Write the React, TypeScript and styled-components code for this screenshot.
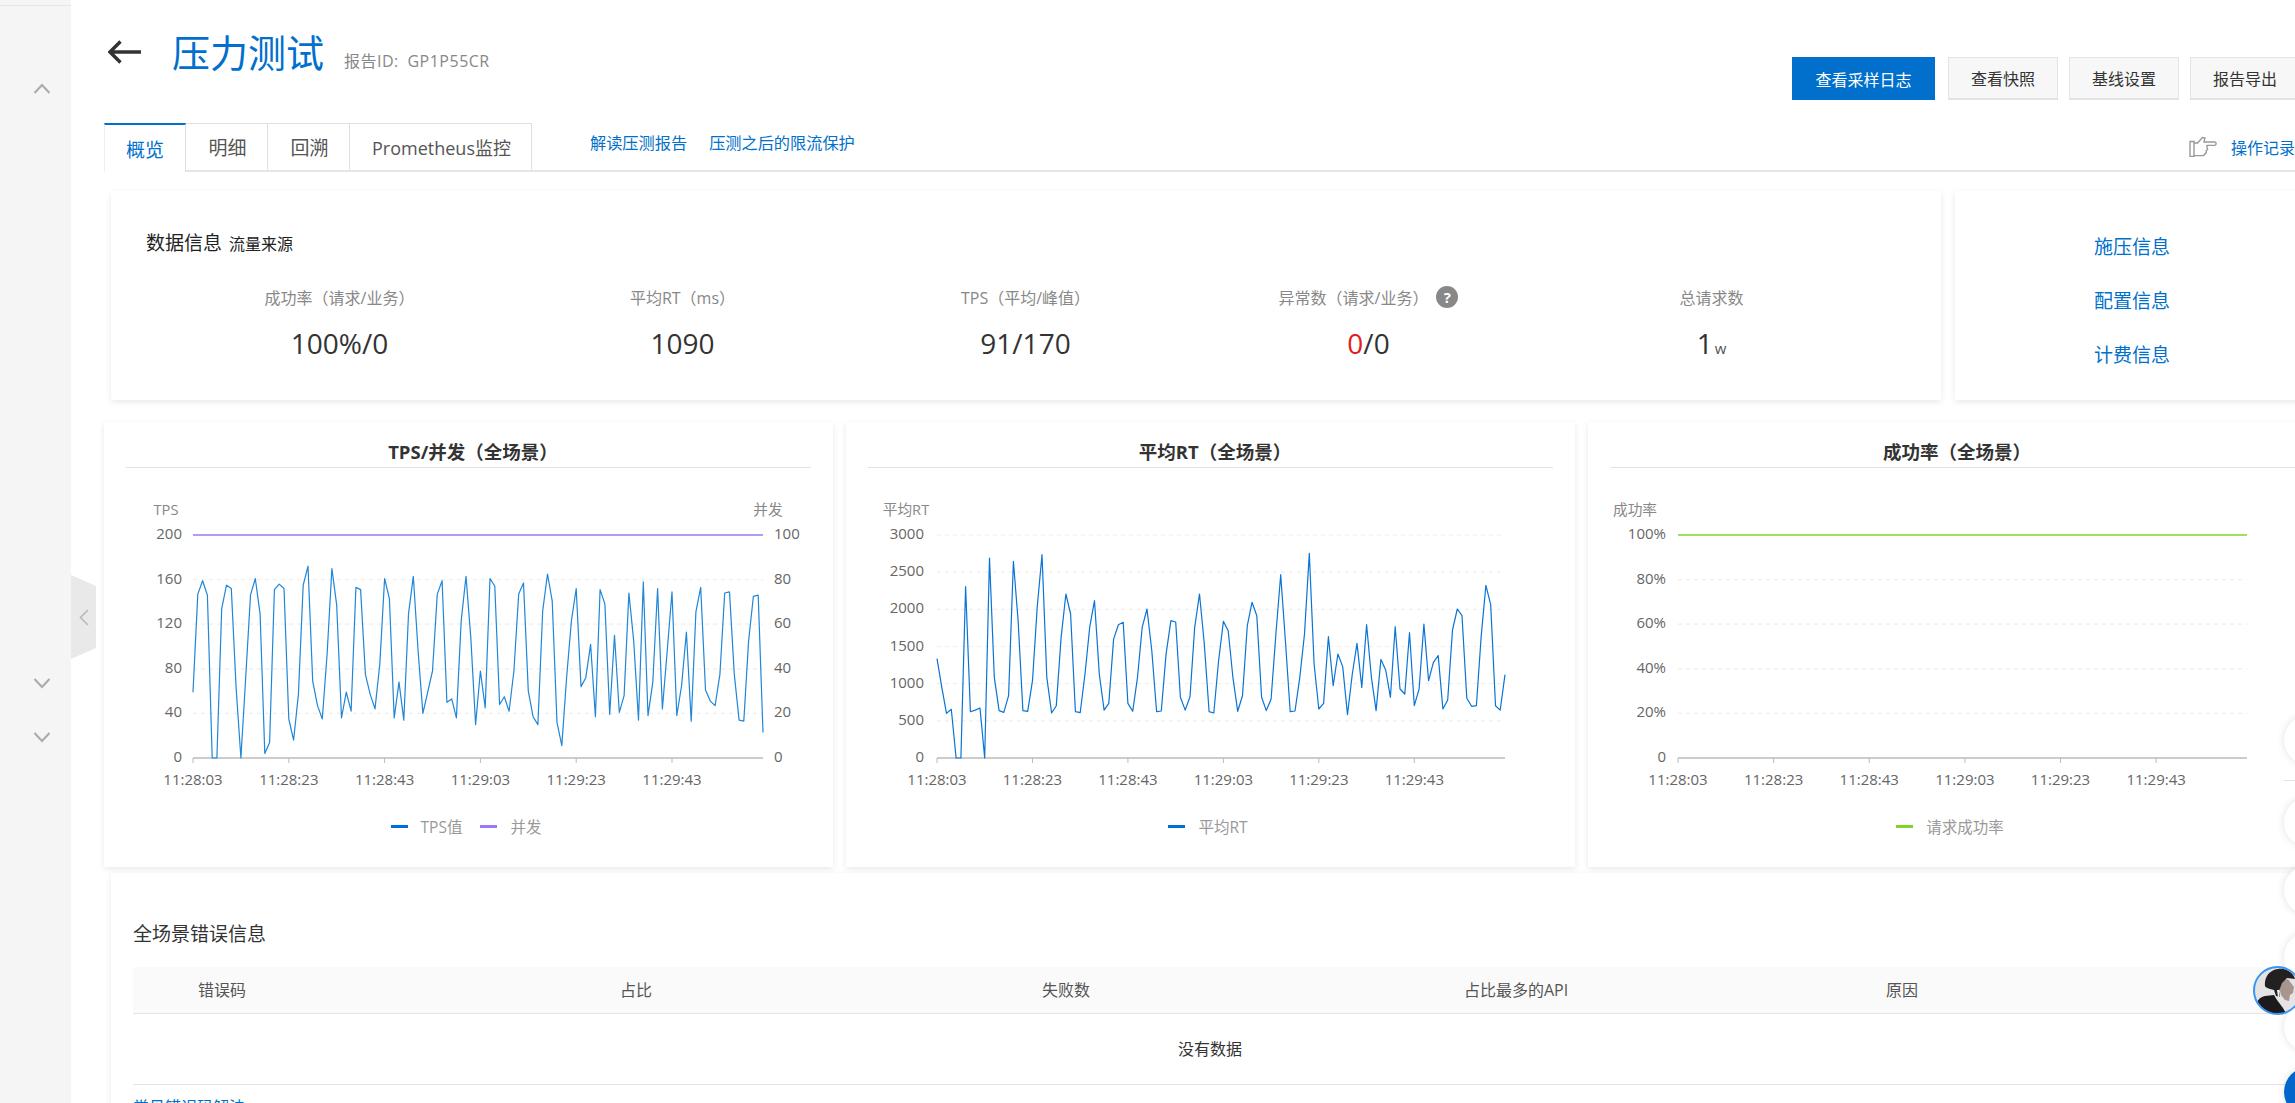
import styled, { createGlobalStyle } from "styled-components";

const GlobalStyle = createGlobalStyle`
  html, body {
    margin: 0;
    height: 100%;
    overflow: hidden;
    background: #fff;
    font-family: "Open Sans", "Noto Sans CJK SC", sans-serif;
    color: #333;
  }
  #root { height: 100%; }
`;

const BLUE = "#0070cc";

const Page = styled.div`
  position: relative;
  display: flex;
  width: 2295px;
  height: 1103px;
  overflow: hidden;
`;

const Sidebar = styled.aside`
  flex: none;
  width: 71px;
  height: 100%;
  background: #f5f5f5;
  border-top: 1px solid transparent;
  display: flex;
  flex-direction: column;
  align-items: center;
  padding-left: 13px;
  box-sizing: border-box;
`;

const SideRule = styled.div`
  align-self: stretch;
  height: 1px;
  margin: 4px 0 0 -13px;
  background: #e6e6e6;
`;

const SideChevron = styled.svg<{ $gap: number }>`
  flex: none;
  width: 18px;
  height: 11px;
  margin-top: ${(p) => p.$gap}px;
  fill: none;
  stroke: #aaa;
  stroke-width: 2;
`;

const CollapseTab = styled.div`
  position: absolute;
  left: 71px;
  top: 575px;
  width: 25px;
  height: 84px;
  background: #e9e9e9;
  clip-path: polygon(0 0, 100% 13%, 100% 87%, 0 100%);
  display: flex;
  align-items: center;
  justify-content: center;
`;

const Main = styled.main`
  flex: none;
  width: 2213px;
  margin-left: 33px;
`;

const Header = styled.header`
  display: flex;
  justify-content: space-between;
  align-items: flex-start;
  width: 2196px;
  height: 123px;
`;

const TitleGroup = styled.div`
  display: flex;
  align-items: baseline;
  padding: 26px 0 0 4px;
`;

const BackArrow = styled.svg`
  width: 33px;
  height: 24px;
  margin-right: 31px;
  fill: none;
  stroke: #333;
  stroke-width: 3.4;
  align-self: center;
`;

const Title = styled.h1`
  margin: 0 20px 0 0;
  font-size: 38px;
  line-height: 52px;
  font-weight: 400;
  color: ${BLUE};
`;

const ReportId = styled.span`
  font-size: 16px;
  color: #888;
  word-spacing: 4px;
  letter-spacing: 0.5px;
`;

const Actions = styled.div`
  display: flex;
  padding-top: 57px;
`;

const ActionButton = styled.button<{ $primary?: boolean }>`
  height: 43px;
  width: ${(p) => (p.$primary ? "143px" : "110px")};
  margin-right: ${(p) => (p.$primary ? "13px" : "11px")};
  padding: 0;
  font: inherit;
  font-size: 16px;
  color: ${(p) => (p.$primary ? "#fff" : "#333")};
  background: ${(p) => (p.$primary ? "#0070cc" : "#f7f7f7")};
  border: ${(p) => (p.$primary ? "none" : "1px solid #e3e3e3")};
  border-bottom-width: ${(p) => (p.$primary ? "0" : "2px")};
  &:last-child { margin-right: 0; }
`;

const TabBar = styled.nav`
  display: flex;
  align-items: stretch;
  width: 2191px;
  height: 47px;
  box-sizing: content-box;
  border-bottom: 2px solid #e6e6e6;
`;

const Tab = styled.div<{ $active?: boolean; $wide?: boolean }>`
  flex: none;
  width: ${(p) => (p.$wide ? "182px" : "82px")};
  box-sizing: border-box;
  display: flex;
  align-items: center;
  justify-content: center;
  padding-left: ${(p) => (p.$active ? "0" : "2px")};
  font-size: ${(p) => (p.$wide ? "18px" : "19px")};
  height: ${(p) => (p.$active ? "49px" : "47px")};
  color: ${(p) => (p.$active ? BLUE : "#555")};
  background: #fff;
  border-top: ${(p) => (p.$active ? `2px solid ${BLUE}` : "1px solid #e0e0e0")};
  border-right: 1px solid #e0e0e0;
  border-left: ${(p) => (p.$active ? "1px solid #eee" : "none")};
`;

const TabLinks = styled.div`
  display: flex;
  gap: 22px;
  margin-left: 58px;
  padding-top: 8px;
  font-size: 16.2px;
  line-height: 24px;
  color: ${BLUE};
`;

const OpLog = styled.div`
  display: flex;
  align-items: center;
  gap: 14px;
  margin-left: auto;
  font-size: 16px;
  color: ${BLUE};
  white-space: nowrap;
`;

const HandIcon = styled.svg`
  width: 28px;
  height: 21px;
  fill: none;
  stroke: #999;
  stroke-width: 1.4;
`;

const Card = styled.section`
  background: #fff;
  box-shadow: 0 2px 6px rgba(0, 0, 0, 0.09);
  box-sizing: border-box;
`;

const TopRow = styled.div`
  display: flex;
  gap: 14px;
  margin: 19px 0 0 7px;
`;

const SummaryCard = styled(Card)`
  width: 1830px;
  height: 209px;
  padding: 40px 0 0 35px;
`;

const SummaryHeading = styled.div`
  display: flex;
  align-items: baseline;
  gap: 7px;
  font-size: 19px;
  line-height: 24px;
  color: #222;
`;

const SummarySub = styled.span`
  font-size: 16px;
  color: #222;
`;

const MetricGrid = styled.div`
  display: grid;
  grid-template-columns: repeat(5, 343px);
  margin: 29px 0 0 22px;
`;

const Metric = styled.div`
  display: flex;
  flex-direction: column;
  align-items: center;
  gap: 16px;
`;

const MetricLabel = styled.div`
  display: flex;
  align-items: center;
  gap: 8px;
  height: 24px;
  font-size: 16px;
  color: #888;
`;

const HelpBadge = styled.span`
  display: inline-flex;
  align-items: center;
  justify-content: center;
  width: 22px;
  height: 22px;
  border-radius: 50%;
  background: #888;
  color: #fff;
  font-size: 15px;
  font-weight: 700;
`;

const MetricValue = styled.div`
  font-size: 28px;
  line-height: 36px;
  color: #333;
`;

const Danger = styled.span`
  color: #e02020;
`;

const Unit = styled.span`
  font-size: 15px;
  margin-left: 2px;
  color: #555;
`;

const SideCard = styled(Card)`
  width: 354px;
  height: 209px;
  padding-top: 11px;
  display: flex;
  flex-direction: column;
  align-items: center;
  justify-content: center;
  gap: 27px;
  font-size: 19px;
  line-height: 27px;
  color: ${BLUE};
`;

const ChartRow = styled.div`
  display: flex;
  gap: 13px;
  margin-top: 22px;
`;

const ChartCard = styled(Card)`
  flex: none;
  width: 729px;
  height: 445px;
`;

const ChartTitle = styled.h3`
  margin: 0 22px 1px;
  height: 45px;
  padding-left: 9px;
  box-sizing: content-box;
  border-bottom: 1px solid #e2e2e2;
  font-size: 18.5px;
  line-height: 60px;
  font-weight: 700;
  text-align: center;
  color: #333;
`;

const ChartSvg = styled.svg`
  display: block;
  width: 729px;
  height: 342px;
  font-family: "Open Sans", "Noto Sans CJK SC", sans-serif;
  font-size: 15px;
`;

const Legend = styled.div`
  display: flex;
  justify-content: center;
  align-items: center;
  height: 30px;
  padding-right: 5px;
  font-size: 15.5px;
  color: #999;
`;

const LegendItem = styled.div`
  display: flex;
  align-items: center;
  gap: 13px;
  margin: 0 9px;
`;

const Swatch = styled.i<{ $color: string }>`
  display: block;
  width: 17px;
  height: 3px;
  background: ${(p) => p.$color};
`;

const ErrorCard = styled(Card)`
  width: 2206px;
  height: 260px;
  margin: 6px 0 0 7px;
  padding: 49px 0 0 22px;
`;

const ErrorTitle = styled.div`
  font-size: 19px;
  line-height: 24px;
  color: #333;
`;

const TableHead = styled.div`
  display: grid;
  grid-template-columns: repeat(4, 422px) 1fr;
  align-items: center;
  width: 2154px;
  height: 47px;
  margin-top: 21px;
  padding: 0 0 2px 65px;
  box-sizing: border-box;
  background: #fafafa;
  border-bottom: 1px solid #e4e4e4;
  font-size: 16px;
  color: #555;
`;

const EmptyRow = styled.div`
  display: flex;
  align-items: center;
  justify-content: center;
  width: 2154px;
  height: 71px;
  padding-bottom: 2px;
  box-sizing: border-box;
  border-bottom: 1px solid #e4e4e4;
  font-size: 16px;
  color: #333;
`;

const HelpLink = styled.div`
  margin-top: 10px;
  font-size: 16px;
  line-height: 24px;
  color: ${BLUE};
`;

const FloatButton = styled.div<{ $top: number; $blue?: boolean }>`
  position: absolute;
  left: 2284px;
  top: ${(p) => p.$top}px;
  width: 50px;
  height: 50px;
  border-radius: 50%;
  background: ${(p) => (p.$blue ? "#0066cc" : "#fff")};
  box-shadow: 0 0 9px rgba(0, 0, 0, 0.12);
`;

const FloatRule = styled.div`
  position: absolute;
  left: 2284px;
  top: 780px;
  width: 11px;
  height: 1px;
  background: #e4e4e4;
`;

const Avatar = styled.svg`
  position: absolute;
  left: 2253px;
  top: 966px;
  width: 49px;
  height: 49px;
`;

const tpsData = [
  59, 147, 159, 146, 0, 0, 134, 155, 152, 63, 0, 72, 146, 161, 129, 4, 14, 151, 156, 152,
  35, 16, 57, 155, 172, 69, 47, 35, 93, 170, 137, 36, 59, 42, 153, 151, 75, 57, 44, 84,
  161, 143, 36, 68, 34, 129, 163, 96, 40, 59, 78, 147, 159, 50, 53, 36, 123, 163, 108, 30,
  78, 45, 161, 154, 48, 55, 42, 78, 147, 157, 60, 37, 30, 132, 165, 141, 32, 11, 72, 123,
  152, 64, 72, 102, 37, 151, 138, 39, 110, 41, 56, 148, 105, 34, 158, 38, 68, 152, 44, 96,
  149, 38, 65, 113, 33, 131, 153, 61, 51, 47, 75, 148, 149, 75, 34, 33, 105, 145, 146, 23,
];

const rtData = [
  1336, 950, 600, 655, 0, 0, 2305, 623, 645, 672, 0, 2690, 1085, 637, 614, 838, 2645, 1850, 637, 628,
  1040, 2027, 2735, 1085, 605, 704, 1620, 2206, 1937, 623, 610, 1130, 1758, 2116, 1130, 645, 735, 1600, 1793, 1825,
  735, 628, 1085, 1758, 2004, 1444, 623, 632, 1400, 1847, 1830, 816, 645, 825, 1758, 2206, 1534, 623, 605, 1309,
  1838, 1713, 1085, 628, 838, 1780, 2094, 1915, 816, 637, 794, 1668, 2466, 1578, 623, 632, 1085, 1668, 2753, 1264,
  659, 735, 1632, 973, 1399, 1229, 583, 1130, 1542, 950, 1793, 1085, 637, 1327, 1184, 816, 1767, 928, 861, 1686,
  704, 928, 1802, 1040, 1287, 1377, 659, 780, 1722, 2004, 1915, 803, 695, 704, 1623, 2323, 2063, 704, 645, 1121,
];

const timeLabels = ["11:28:03", "11:28:23", "11:28:43", "11:29:03", "11:29:23", "11:29:43"];

const PLOT_TOP = 66;
const PLOT_BOTTOM = 289;
const PLOT_RIGHT = 659;

type Series = { data: number[]; max: number; color: string; width?: number };

type ChartProps = {
  left: number;
  name: string;
  nameX: number;
  ticks: string[];
  series: Series[];
  rightName?: string;
  rightTicks?: string[];
  solidTop?: boolean;
};

function LineChart({ left, name, nameX, ticks, series, rightName, rightTicks, solidTop }: ChartProps) {
  const rowGap = (PLOT_BOTTOM - PLOT_TOP) / (ticks.length - 1);
  const stepX = (PLOT_RIGHT - left) / 119;

  return (
    <ChartSvg viewBox="0 0 729 342">
      <text x={nameX} y={46} fill="#888" fontSize="14.7" textAnchor="middle">{name}</text>
      {rightName && <text x={664} y={46} fill="#888" fontSize="14.7" textAnchor="middle">{rightName}</text>}

      {ticks.map((t, i) => {
        const y = PLOT_BOTTOM - i * rowGap;
        return (
          <g key={t}>
            {i > 0 && !(solidTop && i === ticks.length - 1) && (
              <line x1={left} x2={PLOT_RIGHT} y1={y} y2={y} stroke="#eee" strokeWidth="1.2" strokeDasharray="4 4" />
            )}
            <text x={78} y={y + 4} fill="#666" textAnchor="end">{t}</text>
            {rightTicks && <text x={670} y={y + 4} fill="#666">{rightTicks[i]}</text>}
          </g>
        );
      })}

      <line x1={left} x2={PLOT_RIGHT} y1={PLOT_BOTTOM} y2={PLOT_BOTTOM} stroke="#bbb" strokeWidth="1.4" />
      {timeLabels.map((t, i) => {
        const x = left + i * 20 * stepX;
        return (
          <g key={t}>
            <line x1={x} x2={x} y1={PLOT_BOTTOM} y2={PLOT_BOTTOM + 5} stroke="#bbb" />
            <text x={x} y={316} fill="#666" textAnchor="middle">{t}</text>
          </g>
        );
      })}

      {series.map((s) => (
        <polyline
          key={s.color}
          fill="none"
          stroke={s.color}
          strokeWidth={s.width ?? 1.2}
          strokeLinejoin="round"
          points={s.data
            .map((v, i) => `${(left + i * stepX).toFixed(1)},${(PLOT_BOTTOM - (v / s.max) * (PLOT_BOTTOM - PLOT_TOP)).toFixed(1)}`)
            .join(" ")}
        />
      ))}
    </ChartSvg>
  );
}

function Chevron({ up, gap }: { up?: boolean; gap: number }) {
  return (
    <SideChevron $gap={gap} viewBox="0 0 18 11">
      <path d={up ? "M1.5 10 9 2l7.5 8" : "M1.5 1 9 9l7.5-8"} />
    </SideChevron>
  );
}

const flat = (v: number) => new Array(120).fill(v);

export default function App() {
  return (
    <Page>
      <GlobalStyle />
      <Sidebar>
        <SideRule />
        <Chevron up gap={77} />
        <Chevron gap={584} />
        <Chevron gap={43} />
      </Sidebar>
      <CollapseTab>
        <svg width="10" height="17" viewBox="0 0 10 17" fill="none" stroke="#b5b9c0" strokeWidth="1.6">
          <path d="M9 1 1.5 8.5 9 16" />
        </svg>
      </CollapseTab>

      <Main>
        <Header>
          <TitleGroup>
            <BackArrow viewBox="0 0 33 24">
              <path d="M33 12H2M12.5 1.5 2 12l10.5 10.5" />
            </BackArrow>
            <Title>压力测试</Title>
            <ReportId>报告ID: GP1P55CR</ReportId>
          </TitleGroup>
          <Actions>
            <ActionButton $primary>查看采样日志</ActionButton>
            <ActionButton>查看快照</ActionButton>
            <ActionButton>基线设置</ActionButton>
            <ActionButton>报告导出</ActionButton>
          </Actions>
        </Header>

        <TabBar>
          <Tab $active>概览</Tab>
          <Tab>明细</Tab>
          <Tab>回溯</Tab>
          <Tab $wide>Prometheus监控</Tab>
          <TabLinks>
            <span>解读压测报告</span>
            <span>压测之后的限流保护</span>
          </TabLinks>
          <OpLog>
            <HandIcon viewBox="0 0 28 21">
              <path d="M1 5.5h4v15H1zM5 7h3.5L13.5 1.5l2.5.5-1 4h10.5c2.2.4 2.2 3 0 3.4H18v2.4c1 1 .6 2.2-.7 2.6v2.2l-2.8 3H5" />
            </HandIcon>
            操作记录
          </OpLog>
        </TabBar>

        <TopRow>
          <SummaryCard>
            <SummaryHeading>
              数据信息
              <SummarySub>流量来源</SummarySub>
            </SummaryHeading>
            <MetricGrid>
              <Metric>
                <MetricLabel>成功率（请求/业务）</MetricLabel>
                <MetricValue>100%/0</MetricValue>
              </Metric>
              <Metric>
                <MetricLabel>平均RT（ms）</MetricLabel>
                <MetricValue>1090</MetricValue>
              </Metric>
              <Metric>
                <MetricLabel>TPS（平均/峰值）</MetricLabel>
                <MetricValue>91/170</MetricValue>
              </Metric>
              <Metric>
                <MetricLabel>
                  异常数（请求/业务）
                  <HelpBadge>?</HelpBadge>
                </MetricLabel>
                <MetricValue>
                  <Danger>0</Danger>/0
                </MetricValue>
              </Metric>
              <Metric>
                <MetricLabel>总请求数</MetricLabel>
                <MetricValue>
                  1<Unit>w</Unit>
                </MetricValue>
              </Metric>
            </MetricGrid>
          </SummaryCard>
          <SideCard>
            <span>施压信息</span>
            <span>配置信息</span>
            <span>计费信息</span>
          </SideCard>
        </TopRow>

        <ChartRow>
          <ChartCard>
            <ChartTitle>TPS/并发（全场景）</ChartTitle>
            <LineChart
              left={89}
              name="TPS"
              nameX={62}
              ticks={["0", "40", "80", "120", "160", "200"]}
              rightName="并发"
              rightTicks={["0", "20", "40", "60", "80", "100"]}
              solidTop
              series={[
                { data: tpsData, max: 200, color: "#1f86d8" },
                { data: flat(100), max: 100, color: "#9a78f8", width: 1.6 },
              ]}
            />
            <Legend>
              <LegendItem>
                <Swatch $color="#0070d8" />
                TPS值
              </LegendItem>
              <LegendItem>
                <Swatch $color="#9a78f8" />
                并发
              </LegendItem>
            </Legend>
          </ChartCard>

          <ChartCard>
            <ChartTitle>平均RT（全场景）</ChartTitle>
            <LineChart
              left={91}
              name="平均RT"
              nameX={60}
              ticks={["0", "500", "1000", "1500", "2000", "2500", "3000"]}
              series={[{ data: rtData, max: 3000, color: "#0a74d4" }]}
            />
            <Legend>
              <LegendItem>
                <Swatch $color="#0070d8" />
                平均RT
              </LegendItem>
            </Legend>
          </ChartCard>

          <ChartCard>
            <ChartTitle>成功率（全场景）</ChartTitle>
            <LineChart
              left={90}
              name="成功率"
              nameX={47}
              ticks={["0", "20%", "40%", "60%", "80%", "100%"]}
              solidTop
              series={[{ data: flat(100), max: 100, color: "#7ed32e", width: 1.6 }]}
            />
            <Legend>
              <LegendItem>
                <Swatch $color="#7ed32e" />
                请求成功率
              </LegendItem>
            </Legend>
          </ChartCard>
        </ChartRow>

        <ErrorCard>
          <ErrorTitle>全场景错误信息</ErrorTitle>
          <TableHead>
            <span>错误码</span>
            <span>占比</span>
            <span>失败数</span>
            <span>占比最多的API</span>
            <span>原因</span>
          </TableHead>
          <EmptyRow>没有数据</EmptyRow>
          <HelpLink>常见错误码解法</HelpLink>
        </ErrorCard>
      </Main>

      <FloatButton $top={715} />
      <FloatRule />
      <FloatButton $top={797} />
      <FloatButton $top={865} />
      <FloatButton $top={932} />
      <FloatButton $top={1002} />
      <FloatButton $top={1067} $blue />

      <Avatar viewBox="0 0 49 49">
        <defs>
          <clipPath id="avatar-clip">
            <circle cx="24.5" cy="24.5" r="23.5" />
          </clipPath>
        </defs>
        <circle cx="24.5" cy="24.5" r="24" fill="#e4e4e4" />
        <g clipPath="url(#avatar-clip)">
          <path d="M3 40c1-6 4-9 9-10l9-1 3 5 6 8 4 7H8z" fill="#1c1a1c" />
          <path d="M27 15l8-2 6 8-1 6-3 2-1 6-4-1-4-5-2-8z" fill="#a8958f" />
          <path d="M12 20c-1-8 4-16 13-17 8-1 15 3 17 10l-8-1-5 5-3 8 1 6-4-1-2-6-4-1c-3-1-5-2-5-3z" fill="#232022" />
          <path d="M24 24l1 7 1.5.5-.5-7.5z" fill="#f2f2f2" />
        </g>
        <circle cx="24.5" cy="24.5" r="23.5" fill="none" stroke="#3a96f5" strokeWidth="2" />
      </Avatar>
    </Page>
  );
}
